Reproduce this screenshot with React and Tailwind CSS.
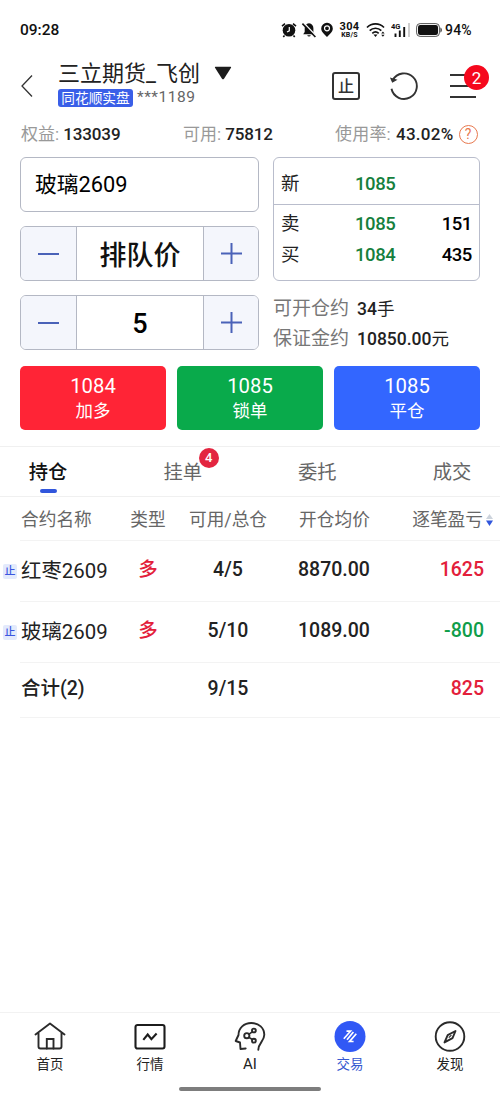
import { useState } from "react";

const contratos = [
  { nome: "红枣2609", tipo: "多", qtd: "4/5", media: "8870.00", lucro: 1625 },
  { nome: "玻璃2609", tipo: "多", qtd: "5/10", media: "1089.00", lucro: -800 },
];

const abas = [
  { id: "pos", label: "持仓" },
  { id: "pend", label: "挂单", badge: 4 },
  { id: "ordens", label: "委托" },
  { id: "neg", label: "成交" },
];

const acoes = [
  { preco: "1084", label: "加多", cor: "bg-[#ff2436]" },
  { preco: "1085", label: "锁单", cor: "bg-[#09aa4b]" },
  { preco: "1085", label: "平仓", cor: "bg-[#3366ff]" },
];

function StatusBar() {
  return (
    <div className="h-[50px] pt-[10px] pl-[20px] flex items-center text-[#111]">
      <span className="w-[261px] text-[15.5px] leading-[20px] font-medium">09:28</span>
      <svg width="16" height="16" viewBox="0 0 16 16" className="shrink-0">
        <circle cx="8" cy="8.3" r="6.3" fill="#111" />
        <path d="M1 4.2 4 1.6M15 4.2 12 1.6M3.5 13.5 2.3 15M12.5 13.5l1.2 1.5" stroke="#111" strokeWidth="1.6" />
        <path d="M8.3 5v3.8L6 10" stroke="#fff" strokeWidth="1.2" fill="none" />
      </svg>
      <svg width="16" height="16" viewBox="0 0 16 16" className="ml-[4px] shrink-0">
        <path d="M8 1.2c-3 .4-4.3 2.4-4.3 5V10L2.2 12.3h11.6L12.4 10V6.2c0-2.6-1.5-4.6-4.4-5zM6.2 13.3a1.9 1.9 0 0 0 3.6 0z" fill="#111" />
        <path d="M2.6.8 15.2 14" stroke="#fff" strokeWidth="1.5" />
        <path d="M1.4 1.6 14.4 15" stroke="#111" strokeWidth="1.6" />
      </svg>
      <svg width="12" height="16" viewBox="0 0 12 16" className="ml-[4px] shrink-0">
        <path d="M6 .8A5.7 5.7 0 0 0 .2 6.4C.2 10 3.5 12 6 15c2.5-3 5.8-5 5.8-8.6A5.7 5.7 0 0 0 6 .8z" fill="#111" />
        <circle cx="6" cy="6.3" r="2.5" fill="none" stroke="#fff" strokeWidth="1.2" />
      </svg>
      <div className="ml-[6px] w-[21px] shrink-0 flex flex-col items-center">
        <span className="h-[9px] text-[11px] leading-[9px] tracking-[0.3px] font-bold">304</span>
        <span className="mt-[1px] h-[7px] text-[7px] leading-[7px] tracking-[0.2px] font-bold">KB/S</span>
      </div>
      <svg width="21" height="16" viewBox="0 0 21 16" className="ml-[6px] shrink-0" fill="none" stroke="#111" strokeWidth="1.7">
        <path d="M1 5.5a12 12 0 0 1 17 0M3.7 8.6a8.3 8.3 0 0 1 11.6 0M6.3 11.3a4.8 4.8 0 0 1 6.4 0" />
        <path d="M7.5 12.6h4l-2 2.4z" fill="#111" stroke="none" />
        <path d="m15.2 11.5 1.7-2 1.7 2zM15.2 12.7l1.7 2 1.7-2z" fill="#111" stroke="none" />
      </svg>
      <svg width="20" height="16" viewBox="0 0 20 16" className="ml-[4px] shrink-0">
        <path d="M4.5 11.5V15M8.8 8.5V15M13.2 5V15" stroke="#111" strokeWidth="1.9" />
        <path d="M18 1v14" stroke="#ccc" strokeWidth="1.9" />
        <text x="0" y="6.5" fontSize="7.5" fontWeight="700" fill="#111">4G</text>
      </svg>
      <svg width="27" height="14" viewBox="0 0 27 14" className="ml-[5px] shrink-0">
        <rect x=".6" y=".6" width="22.8" height="12.8" rx="3.5" fill="none" stroke="#555" strokeWidth="1" />
        <rect x="2" y="2" width="20" height="10" rx="2.2" fill="#111" />
        <path d="M24.5 4.5c1.6.6 1.6 4.4 0 5z" fill="#111" />
      </svg>
      <span className="ml-[2px] text-[14px] leading-[20px] tracking-[0.2px] font-medium">94%</span>
    </div>
  );
}

function Header() {
  return (
    <div className="h-[64px] flex items-start">
      <svg width="14" height="24" viewBox="0 0 14 24" className="mt-[24px] ml-[20px] shrink-0" fill="none" stroke="#333" strokeWidth="1.3">
        <path d="M12 1.5 2 12l10 10.5" />
      </svg>
      <div className="ml-[24px] w-[273px] pt-[11px]">
        <div className="flex items-center h-[26px] text-[22px] leading-[26px] text-[#222]">
          <span>三立期货_飞创</span>
          <svg width="18" height="14" viewBox="0 0 18 14" className="-mt-[2px] ml-[14px]">
            <path d="M1.5.8h15q1 0 .5.9L10 12.7q-1 1.2-2 0L1 1.7Q.5.8 1.5.8z" fill="#1c1c1c" />
          </svg>
        </div>
        <div className="mt-[2px] flex items-center">
          <span className="w-[75px] h-[18px] rounded-[3px] bg-[#3a5fe8] text-white text-[13.7px] leading-[18px] text-center">同花顺实盘</span>
          <span className="ml-[4px] -mt-[2px] text-[15.5px] leading-[18px] tracking-[0.5px] text-[#666]">***1189</span>
        </div>
      </div>
      <div className="mt-[22px] ml-[1px] w-[28px] h-[28px] pt-[1px] border-2 border-[#333] rounded-[3px] flex items-center justify-center text-[16px] leading-none font-medium text-[#333]">止</div>
      <svg width="30" height="30" viewBox="0 0 30 30" className="mt-[21px] ml-[29px] shrink-0" fill="none" stroke="#333" strokeWidth="1.9">
        <path d="M2.5 17.8A12.8 12.8 0 1 0 3.8 9" />
        <path d="m2 7.5 1.5 3.5 3.5-2z" fill="#333" strokeWidth="1.2" />
      </svg>
      <div className="relative mt-[24px] ml-[31px] w-[26px] h-[24px] flex flex-col justify-between">
        <i className="h-[2px] bg-[#333]" />
        <i className="h-[2px] bg-[#333]" />
        <i className="h-[2px] bg-[#333]" />
        <span className="absolute left-[14px] -top-[9px] size-[25px] rounded-full bg-[#f5081d] text-white text-[17px] leading-[26px] text-center">2</span>
      </div>
    </div>
  );
}

function Resumo() {
  return (
    <div className="h-[43px] pb-[3px] flex items-center text-[17px] leading-[20px] text-[#999]">
      <span className="ml-[21px] w-[162px] flex gap-[4px]">
        <span>权益:</span>
        <b className="font-medium text-[#222] tracking-[-0.1px]">133039</b>
      </span>
      <span className="w-[152px] flex gap-[4px]">
        <span>可用:</span>
        <b className="font-medium text-[#222] tracking-[-0.1px]">75812</b>
      </span>
      <span className="flex gap-[5px]">
        <span className="tracking-[0.2px]">使用率:</span>
        <b className="font-medium text-[#222] tracking-[0.3px]">43.02%</b>
      </span>
      <span className="ml-[5px] size-[19px] rounded-full border-[1.5px] border-[#e8794f] text-[#e8794f] text-[14px] leading-[17px] text-center">?</span>
    </div>
  );
}

function Stepper({ valor, onMenos, onMais, texto }) {
  return (
    <div className="h-[55px] flex border border-[#b4b8c4] rounded-[6px] overflow-hidden">
      <button onClick={onMenos} className="w-[56px] bg-[#f4f6fc] border-r border-[#b4b8c4] flex items-center justify-center">
        <i className="w-[21px] h-[2px] bg-[#4a62b8]" />
      </button>
      <span className={texto}>{valor}</span>
      <button onClick={onMais} className="w-[55px] bg-[#f4f6fc] border-l border-[#b4b8c4] flex items-center justify-center">
        <svg width="21" height="21" viewBox="0 0 21 21" stroke="#4a62b8" strokeWidth="2">
          <path d="M0 10.5h21M10.5 0v21" />
        </svg>
      </button>
    </div>
  );
}

function Cotacao() {
  return (
    <div className="h-[124px] border border-[#b9bdcc] rounded-[6px] text-[18.5px] leading-[30px] text-[#222]">
      <div className="h-[47px] pt-[6px] border-b border-[#b9bdcc] flex items-center px-[7px]">
        <span className="w-[74px]">新</span>
        <span className="font-medium text-[#15803d] tracking-[-0.4px]">1085</span>
      </div>
      <div className="pt-[4px] px-[7px]">
        <div className="flex h-[31px]">
          <span className="w-[74px]">卖</span>
          <span className="font-medium text-[#15803d] tracking-[-0.4px]">1085</span>
          <span className="ml-auto font-medium text-black tracking-[-0.4px]">151</span>
        </div>
        <div className="flex h-[30px]">
          <span className="w-[74px]">买</span>
          <span className="font-medium text-[#15803d] tracking-[-0.4px]">1084</span>
          <span className="ml-auto font-medium text-black tracking-[-0.4px]">435</span>
        </div>
      </div>
    </div>
  );
}

function Rodape() {
  const item = "w-[100px] flex flex-col items-center";
  const label = "mt-[2px] text-[13.5px] leading-[18px]";
  return (
    <nav className="h-[88px] border-t border-[#f2f2f2] text-[#222]">
      <div className="flex pt-[8px]">
        <div className={item}>
          <svg width="32" height="32" viewBox="0 0 32 32" fill="none" stroke="#2a2a2a" strokeWidth="1.9" strokeLinejoin="round" strokeLinecap="round">
            <path d="M1.5 13.5 16 2.5l14.5 11M4.5 12v13.5q0 2 2 2h19q2 0 2-2V12" />
            <path d="M12.8 27.5V18h6.7v9.5" strokeLinejoin="miter" />
          </svg>
          <span className={label}>首页</span>
        </div>
        <div className={item}>
          <svg width="32" height="32" viewBox="0 0 32 32" fill="none" stroke="#1c1c1c" strokeWidth="2.1">
            <rect x="1.5" y="4" width="29" height="23.5" rx="2" />
            <path d="m9.3 18.8 4.4-5.3 3.7 4.7 5.2-5.7" />
          </svg>
          <span className={label}>行情</span>
        </div>
        <div className={item}>
          <svg width="32" height="32" viewBox="0 0 32 32" fill="none" stroke="#2a2a2a" strokeWidth="1.9" strokeLinejoin="round" strokeLinecap="round">
            <path d="M11.7 27.5 6.5 28 6 21.5 1.7 20 4.5 14C4.5 7 10 2 17.3 2 25 2 30.3 7 30.3 13.8c0 6.5-6 8.2-6 15" />
            <circle cx="12.8" cy="14.7" r="2.6" />
            <circle cx="19.9" cy="9.5" r="1.9" />
            <circle cx="19.9" cy="19.7" r="1.9" />
            <path d="m15 13.2 3.3-2.4M15 16.3l3.3 2.2" strokeWidth="1.6" />
          </svg>
          <span className="mt-[2px] text-[15px] leading-[18px]">AI</span>
        </div>
        <div className={item}>
          <svg width="32" height="32" viewBox="0 0 32 32" fill="none" stroke="#fff" strokeWidth="1.7">
            <circle cx="16" cy="15.5" r="15.5" fill="#3158f5" stroke="none" />
            <path d="M9.8 17.8 16.5 10.2h-4M13 18.8 19.4 11M22.3 12.8 15.6 20.5h4" />
          </svg>
          <span className="mt-[2px] text-[13.5px] leading-[18px] text-[#3558d0]">交易</span>
        </div>
        <div className={item}>
          <svg width="32" height="32" viewBox="0 0 32 32" fill="none" stroke="#2a2a2a" strokeWidth="1.9" strokeLinejoin="round">
            <circle cx="16" cy="15.5" r="14.3" />
            <path d="m21.5 10-3 7.2-8 4.2 3.2-7.2z" />
            <path d="m14.8 16.7 2.6-2.6" strokeWidth="1.2" />
          </svg>
          <span className={label}>发现</span>
        </div>
      </div>
      <div className="mt-[14px] mx-auto w-[142px] h-[4px] rounded-full bg-[#7d7d7d]" />
    </nav>
  );
}

export default function App() {
  const [lotes, setLotes] = useState(5);
  const [aba, setAba] = useState("pos");

  const total = contratos.reduce((soma, c) => soma + c.lucro, 0);
  const corLucro = (v) => (v < 0 ? "text-[#0f9d4a]" : "text-[#e3203a]");
  const grade = "grid grid-cols-[98px_60px_100px_112px_1fr] items-center text-center";

  return (
    <div className="w-[500px] h-[1100px] bg-white flex flex-col overflow-hidden font-[Roboto,'Noto_Sans_CJK_SC',sans-serif]">
      <StatusBar />
      <Header />
      <Resumo />

      <div className="pl-[20px] flex gap-[14px]">
        <div className="w-[239px] flex flex-col gap-[14px]">
          <div className="h-[55px] border border-[#b4b8c4] rounded-[6px] px-[14px] text-[21.8px] leading-[53px] text-black">玻璃2609</div>
          <Stepper valor="排队价" texto="flex-1 pt-[2px] text-center text-[27px] leading-[55px] font-medium text-[#111]" />
          <Stepper
            valor={lotes}
            onMenos={() => setLotes((n) => Math.max(1, n - 1))}
            onMais={() => setLotes((n) => n + 1)}
            texto="flex-1 pt-[1px] text-center text-[27px] leading-[55px] font-medium text-black"
          />
        </div>
        <div className="w-[207px]">
          <Cotacao />
          <div className="mt-[13px] text-[19px] leading-[30px] text-[#777]">
            <div className="flex gap-[8px]">
              <span>可开仓约</span>
              <span className="text-[17.5px] font-medium text-[#222]">34<span className="font-normal">手</span></span>
            </div>
            <div className="flex gap-[8px]">
              <span>保证金约</span>
              <span className="text-[17.5px] font-medium text-[#222]">10850.00<span className="font-normal">元</span></span>
            </div>
          </div>
        </div>
      </div>

      <div className="mt-[12px] px-[20px] grid grid-cols-3 gap-[11px]">
        {acoes.map((a) => (
          <button key={a.label} className={`h-[64px] rounded-[5px] text-white flex flex-col items-center justify-center ${a.cor}`}>
            <span className="mt-[2px] text-[20.3px] leading-[24px]">{a.preco}</span>
            <span className="text-[17.5px] leading-[26px]">{a.label}</span>
          </button>
        ))}
      </div>

      <div className="mt-[16px] h-[51px] border-y border-[#f0f0f0] flex justify-between px-[28px]">
        {abas.map((t) => (
          <button
            key={t.id}
            onClick={() => setAba(t.id)}
            className={`relative w-[40px] h-full whitespace-nowrap text-[19.3px] leading-[51px] ${
              aba === t.id ? "font-medium text-[#111]" : "text-[#666]"
            }`}
          >
            {t.label}
            {aba === t.id && <i className="absolute left-[12px] bottom-[3px] w-[17px] h-[4px] rounded-[2px] bg-[#3156dc]" />}
            {t.badge && (
              <span className="absolute left-[36px] top-[1px] size-[20px] rounded-full bg-[#e32540] text-white text-[13px] leading-[20px] font-medium">{t.badge}</span>
            )}
          </button>
        ))}
      </div>

      <div className={`h-[43px] pt-[3px] pl-[21px] pr-[7px] text-[17.7px] text-[#666] ${grade}`}>
        <span className="text-left">合约名称</span>
        <span className="-ml-[2px]">类型</span>
        <span className="-ml-[2px]">可用/总仓</span>
        <span className="-ml-[1px]">开仓均价</span>
        <span className="flex items-center justify-end gap-[3px] whitespace-nowrap">
          逐笔盈亏
          <svg width="7" height="12" viewBox="0 0 7 12" className="shrink-0">
            <path d="M3.5 0 7 5H0z" fill="#ccd3dc" />
            <path d="M3.5 12 7 6.5H0z" fill="#3156dc" />
          </svg>
        </span>
      </div>

      {contratos.map((c) => (
        <div key={c.nome} className="h-[61px] flex">
          <span className="mt-[24px] ml-[3px] w-[14px] h-[15px] rounded-[2px] bg-[#e3eafc] text-[#3b56e0] text-[11px] leading-[15px] text-center font-medium shrink-0">止</span>
          <div className={`flex-1 ml-[3px] pb-[3px] pr-[16px] border-t border-[#f3f3f3] text-[19.5px] font-medium text-[#222] ${grade}`}>
            <span className="pt-[4px] pl-[1px] text-left text-[20.4px] font-normal whitespace-nowrap">{c.nome}</span>
            <span className="text-[#e3203a]">{c.tipo}</span>
            <span>{c.qtd}</span>
            <span>{c.media}</span>
            <span className={`text-right ${corLucro(c.lucro)}`}>{c.lucro}</span>
          </div>
        </div>
      ))}
      <div className={`ml-[20px] pb-[3px] pr-[16px] h-[56px] border-y border-[#f3f3f3] text-[19.5px] font-medium text-[#222] ${grade}`}>
        <span className="pl-[1px] text-left">合计(2)</span>
        <span />
        <span>9/15</span>
        <span />
        <span className={`text-right ${corLucro(total)}`}>{total}</span>
      </div>

      <div className="flex-1" />
      <Rodape />
    </div>
  );
}
